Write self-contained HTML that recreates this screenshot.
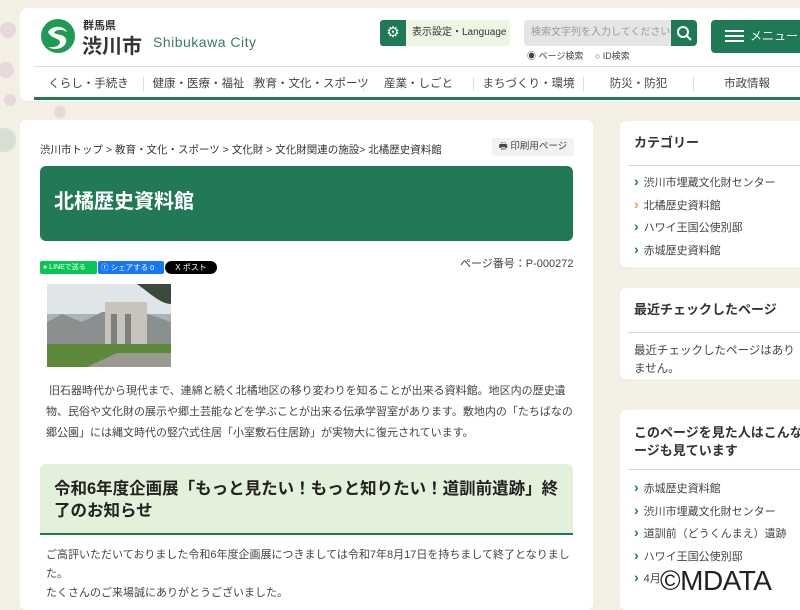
<!DOCTYPE html>
<html><head><meta charset="utf-8"><style>
*{margin:0;padding:0;box-sizing:border-box}
body{width:800px;height:600px;overflow:hidden;background:#f3efe5;font-family:"Liberation Sans","Noto Sans CJK JP",sans-serif;color:#333;position:relative}
.abs{position:absolute}
.hdr{left:20px;top:8px;width:800px;height:93px;background:#fff;border-radius:8px}
.nav{left:34px;top:66px;width:766px;height:34px;border-top:1px solid #ddd;border-bottom:3px solid #1e7a55;display:flex;font-size:11.5px;color:#444;white-space:nowrap}
.nav div{text-align:center;border-right:1px solid #ddd;height:14px;margin-top:10px;line-height:14px}
.main{left:20px;top:120px;width:573px;height:490px;background:#fff;border-radius:6px}
.side{left:620px;width:190px;background:#fff;border-radius:6px}
.side h3{font-size:13px;font-weight:bold;padding:0 14px;color:#333}
.side .ln{border-top:1px solid #cfd8c0;margin:0 8px 0 8px}
.side li{list-style:none;font-size:11px;color:#444;padding-left:14px;height:22.5px;line-height:22.5px;white-space:nowrap}
.side li:before{content:"›";color:#1e7a55;font-weight:bold;font-size:14px;margin-right:5px}
.side li.y:before{color:#e0a020}
a{color:#333}
</style></head><body>
<svg class="abs" style="left:0;top:0" width="800" height="600">
<g fill="#dcc3d3" opacity=".5"><circle cx="8" cy="30" r="8"/><circle cx="6" cy="70" r="8"/><circle cx="10" cy="100" r="6"/><circle cx="60" cy="112" r="6"/></g>
<g fill="#b7cfc0" opacity=".5"><circle cx="4" cy="140" r="12"/></g>
</svg>
<div class="abs hdr"></div>
<svg class="abs" style="left:40px;top:18px" width="36" height="36" viewBox="0 0 36 36"><circle cx="18" cy="18" r="17" fill="#1f9a55"/><path d="M8 14c4-7 16-7 19 0c-5-3-11-3-13 1c3 2 10 1 12 6c2 8-10 13-18 8c6 1 12-1 12-5c0-4-9-3-12-10z" fill="#fff"/></svg>
<div class="abs" style="left:83px;top:17px;font-size:11px;font-weight:bold;color:#333">群馬県</div>
<div class="abs" style="left:82px;top:30px;font-size:20px;font-weight:bold;color:#333">渋川市</div>
<div class="abs" style="left:153px;top:34px;font-size:14px;color:#3a7a64;letter-spacing:.5px">Shibukawa City</div>
<div class="abs" style="left:380px;top:20px;width:26px;height:26px;background:#1e7a55;border-radius:3px 0 0 3px;color:#fff;text-align:center;line-height:26px;font-size:15px">⚙</div>
<div class="abs" style="left:406px;top:20px;width:104px;height:26px;background:#eef5e2;border-radius:0 3px 3px 0;font-size:10px;line-height:26px;padding-left:6px;color:#333">表示設定・Language</div>
<div class="abs" style="left:524px;top:20px;width:147px;height:26px;background:#e5e5e5;border-radius:4px 0 0 4px;font-size:10px;line-height:26px;padding-left:7px;color:#999;white-space:nowrap;overflow:hidden">検索文字列を入力してください</div>
<div class="abs" style="left:671px;top:20px;width:26px;height:26px;background:#1e7a55;border-radius:0 4px 4px 0"><svg width="26" height="26"><circle cx="12" cy="12" r="5" stroke="#fff" stroke-width="2" fill="none"/><path d="M16 16l4 4" stroke="#fff" stroke-width="2"/></svg></div>
<div class="abs" style="left:527px;top:49px;font-size:9px;color:#444">◉ ページ検索　 ○ ID検索</div>
<div class="abs" style="left:711px;top:20px;width:89px;height:33px;background:#1e7a55;border-radius:4px 0 0 4px;color:#fff;font-size:12px;line-height:33px;padding-left:14px"><span style="display:inline-block;width:19px;height:12px;border-top:2px solid #fff;border-bottom:2px solid #fff;position:relative;vertical-align:-2px;margin-right:6px"><span style="position:absolute;left:0;top:3px;width:19px;border-top:2px solid #fff"></span></span>メニュー</div>
<div class="abs nav"><div style="width:110px">くらし・手続き</div><div style="width:110px">健康・医療・福祉</div><div style="width:110px">教育・文化・スポーツ</div><div style="width:110px">産業・しごと</div><div style="width:110px">まちづくり・環境</div><div style="width:110px">防災・防犯</div><div style="width:106px;border:none">市政情報</div></div>

<div class="abs main"></div>
<div class="abs" style="left:40px;top:142px;font-size:10.5px;color:#333;white-space:nowrap"><a>渋川市トップ</a> &gt; <a>教育・文化・スポーツ</a> &gt; <a>文化財</a> &gt; <a>文化財関連の施設</a>&gt; 北橘歴史資料館</div>
<div class="abs" style="left:492px;top:138px;width:82px;height:18px;background:#f2f2f2;border-radius:3px;font-size:9.5px;line-height:18px;text-align:center;color:#444">🖶 印刷用ページ</div>
<div class="abs" style="left:40px;top:166px;width:533px;height:75px;background:#217955;border-radius:6px;color:#fff;font-size:20px;font-weight:bold;line-height:72px;padding-left:14px">北橘歴史資料館</div>
<div class="abs" style="left:40px;top:261px;width:57px;height:13px;background:#06c755;border-radius:2px;color:#fff;font-size:7px;line-height:13px;padding-left:3px">● LINEで送る</div>
<div class="abs" style="left:98px;top:261px;width:66px;height:13px;background:#1877f2;border-radius:2px;color:#fff;font-size:7.5px;line-height:13px;padding-left:3px">ⓕ シェアする 0</div>
<div class="abs" style="left:165px;top:261px;width:52px;height:13px;background:#000;border-radius:7px;color:#fff;font-size:8px;line-height:13px;text-align:center">X ポスト</div>
<div class="abs" style="left:460px;top:255px;font-size:11px;color:#444">ページ番号：P-000272</div>
<svg class="abs" style="left:47px;top:284px" width="124" height="83"><rect width="124" height="83" fill="#a8b4b8"/><rect y="0" width="124" height="30" fill="#dfe5e8"/><path d="M90 0h34v20c-10 0-20-10-34-20z" fill="#3b4a3a"/><path d="M0 38l15-8 20 8 20-10 40 0 29 10v22H0z" fill="#8a9090"/><rect x="58" y="18" width="42" height="48" fill="#c7c4bd"/><rect x="64" y="30" width="6" height="36" fill="#7e7f7a"/><rect x="78" y="30" width="6" height="36" fill="#7e7f7a"/><rect x="0" y="60" width="124" height="23" fill="#5c8a3a"/><path d="M40 83l30-14h54v14z" fill="#9a9a92"/></svg>
<div class="abs" style="left:46px;top:381px;width:528px;font-size:11px;line-height:21px;color:#444">&nbsp;旧石器時代から現代まで、連綿と続く北橘地区の移り変わりを知ることが出来る資料館。地区内の歴史遺物、民俗や文化財の展示や郷土芸能などを学ぶことが出来る伝承学習室があります。敷地内の「たちばなの郷公園」には縄文時代の竪穴式住居「小室敷石住居跡」が実物大に復元されています。</div>
<div class="abs" style="left:40px;top:464px;width:533px;height:71px;background:#e4f1da;border-radius:6px 6px 0 0;border-bottom:2px solid #1e7a55;font-size:16.5px;font-weight:bold;line-height:22px;padding:14px 14px;color:#222">令和6年度企画展「もっと見たい！もっと知りたい！道訓前遺跡」終了のお知らせ</div>
<div class="abs" style="left:46px;top:546px;width:528px;font-size:11px;line-height:19px;color:#444">ご高評いただいておりました令和6年度企画展につきましては令和7年8月17日を持ちまして終了となりました。<br>たくさんのご来場誠にありがとうございました。</div>

<div class="abs side" style="top:121px;height:146px"><h3 style="line-height:44px">カテゴリー</h3><div class="ln"></div><ul style="padding-top:4px"><li>渋川市埋蔵文化財センター</li><li class="y">北橘歴史資料館</li><li>ハワイ王国公使別邸</li><li>赤城歴史資料館</li></ul></div>
<div class="abs side" style="top:288px;height:91px"><h3 style="line-height:44px">最近チェックしたページ</h3><div class="ln"></div><p style="font-size:11.5px;line-height:18px;padding:9px 14px;color:#444;width:190px">最近チェックしたページはありません。</p></div>
<div class="abs side" style="top:410px;height:200px"><h3 style="line-height:18px;padding-top:14px;padding-bottom:9px;white-space:nowrap">このページを見た人はこんなペ<br>ージも見ています</h3><div class="ln"></div><ul style="padding-top:6px"><li>赤城歴史資料館</li><li>渋川市埋蔵文化財センター</li><li>道訓前（どうくんまえ）遺跡</li><li>ハワイ王国公使別邸</li><li>4月</li></ul></div>
<div class="abs" style="left:660px;top:565px;font-size:28px;color:#222;letter-spacing:-0.5px">©MDATA</div>
</body></html>
